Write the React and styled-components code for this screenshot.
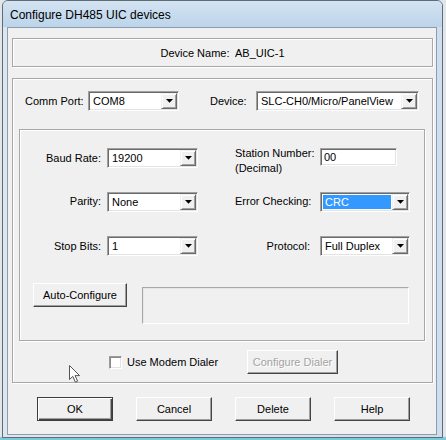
import React from 'react';
import styled, { createGlobalStyle, css } from 'styled-components';

const GlobalStyle = createGlobalStyle`
  html, body { margin: 0; padding: 0; }
  body {
    background: #e2e6e9;
    font-family: "Liberation Sans", Arial, sans-serif;
    font-size: 11px;
    color: #000;
  }
`;

const Page = styled.div`
  position: relative;
  width: 446px;
  height: 440px;
  overflow: hidden;
  box-sizing: border-box;
  padding-left: 2px;
  background: linear-gradient(to bottom, #e2e6e9 0, #e2e6e9 437px, #7ccad8 437px);
`;

const Window = styled.div`
  width: 441px;
  height: 438px;
  box-sizing: border-box;
  border: 1px solid #5f6b77;
  border-radius: 6px 6px 0 0;
  overflow: hidden;
  display: flex;
  flex-direction: column;
  background: #c9dbec;
`;

const TitleBar = styled.div`
  height: 26px;
  flex: none;
  display: flex;
  align-items: center;
  padding: 2px 0 0 7px;
  box-sizing: border-box;
  background: linear-gradient(to bottom, #d3e3f2 0%, #bcd4ea 100%);
`;

const Title = styled.span`
  font-family: "Liberation Sans", Arial, sans-serif;
  font-size: 12px;
  color: #000;
`;

const Frame = styled.div`
  flex: 1;
  display: flex;
  padding: 0 5px 2px 4px;
  background: linear-gradient(to right, #dde6ee, #cfdeec);
`;

const Client = styled.div`
  flex: 1;
  box-sizing: border-box;
  background: #f0f0f0;
  border: 1px solid #8e9cab;
  padding: 10px 3px 0 4px;
  display: flex;
  flex-direction: column;
  align-items: flex-start;
`;

const etched = css`
  box-sizing: border-box;
  border: 1px solid #a8a8a8;
  box-shadow: inset 1px 1px 0 #fff, 1px 1px 0 #fff;
`;

const sunken = css`
  box-sizing: border-box;
  border: 1px solid;
  border-color: #a0a0a0 #fff #fff #a0a0a0;
  box-shadow: inset 1px 1px 0 #6a6a6a, inset -1px -1px 0 #e3e3e3;
`;

const DeviceNameBox = styled.div`
  ${etched};
  width: 421px;
  height: 29px;
  display: flex;
  align-items: center;
  justify-content: center;
  white-space: pre;
`;

const GroupBox = styled.div`
  ${etched};
  width: ${p => p.$w}px;
  height: ${p => p.$h}px;
  margin-top: ${p => p.$mt}px;
  margin-left: ${p => p.$ml || 0}px;
  padding-top: ${p => p.$pt || 0}px;
  display: flex;
  flex-direction: column;
  align-items: flex-start;
`;

const TopRow = styled.div`
  display: flex;
  align-items: center;
  height: 20px;
  margin-top: 12px;
  padding-left: 12px;
`;

const Label = styled.div`
  width: ${p => p.$w}px;
  margin-left: ${p => p.$ml || 0}px;
  white-space: nowrap;
`;

const FormGrid = styled.div`
  display: grid;
  grid-template-columns: 87px 128px 85px auto;
  grid-auto-rows: 20px;
  row-gap: 24px;
  align-items: center;
`;

const FieldLabel = styled.div`
  text-align: ${p => (p.$left ? 'left' : 'right')};
  padding-right: ${p => p.$pr}px;
  padding-bottom: ${p => (p.$lift ? 3 : 0)}px;
  white-space: nowrap;
  ${p =>
    p.$multi &&
    css`
      align-self: start;
      line-height: 15px;
      margin-top: -2px;
    `}
`;

const ComboBox = styled.div`
  ${sunken};
  width: ${p => p.$w}px;
  height: 20px;
  padding: 1px;
  background: #fff;
  display: flex;
  justify-self: start;
`;

const ComboValue = styled.div`
  flex: 1;
  padding: 1px;
  display: flex;
`;

const ComboText = styled.div`
  flex: 1;
  height: 14px;
  line-height: 14px;
  padding-left: 2px;
  white-space: nowrap;
  overflow: hidden;
  ${p =>
    p.$selected &&
    css`
      background: #3399ff;
      color: #fff;
    `}
`;

const DropButton = styled.div`
  width: 16px;
  height: 16px;
  box-sizing: border-box;
  background: #f0f0f0;
  border: 1px solid;
  border-color: #f0f0f0 #6a6a6a #6a6a6a #f0f0f0;
  box-shadow: inset 1px 1px 0 #fff, inset -1px -1px 0 #a0a0a0;
  display: flex;
  align-items: center;
  justify-content: center;
`;

const EditBox = styled.div`
  ${sunken};
  width: ${p => p.$w}px;
  height: 18px;
  padding: 1px 1px 1px 3px;
  background: #fff;
  line-height: 14px;
  align-self: start;
  justify-self: start;
`;

const AutoRow = styled.div`
  display: flex;
  align-items: flex-start;
  margin-top: 27px;
  padding-left: 13px;
`;

const StatusBox = styled.div`
  box-sizing: border-box;
  width: 267px;
  height: 37px;
  margin: 4px 0 0 15px;
  border: 1px solid;
  border-color: #a8a8a8 #fff #fff #a8a8a8;
  box-shadow: inset 1px 1px 0 #e6e6e6;
`;

const Button = styled.button`
  width: ${p => p.$w}px;
  height: 24px;
  box-sizing: border-box;
  margin: 0;
  padding: 0;
  font-family: "Liberation Sans", Arial, sans-serif;
  font-size: 11px;
  color: #000;
  background: #f0f0f0;
  border: 1px solid;
  border-color: #fff #454545 #454545 #fff;
  box-shadow: inset -1px -1px 0 #a0a0a0, inset 1px 1px 0 #f0f0f0;
  &:disabled {
    color: #a3a3a3;
    text-shadow: 1px 1px 0 #fff;
  }
  ${p =>
    p.$default &&
    css`
      border-color: #3c3c3c;
      box-shadow: inset 1px 1px 0 #fff, inset -1px -1px 0 #454545, inset -2px -2px 0 #a0a0a0;
    `}
`;

const ModemRow = styled.div`
  display: flex;
  align-items: center;
  height: 24px;
  margin-top: 9px;
  padding-left: 96px;
`;

const CheckWrap = styled.label`
  width: 138px;
  display: flex;
  align-items: center;
`;

const CheckBox = styled.span`
  ${sunken};
  width: 13px;
  height: 13px;
  background: #fff;
  border-color: #9a9a9a #fff #fff #9a9a9a;
  box-shadow: inset 1px 1px 0 #8a8a8a, inset -1px -1px 0 #e3e3e3;
`;

const CheckText = styled.span`
  margin-left: 5px;
`;

const ButtonRow = styled.div`
  display: flex;
  gap: 23px;
  margin-top: 14px;
  padding-left: 25px;
`;

const Cursor = styled.svg`
  position: absolute;
  left: 68px;
  top: 364px;
`;

const Arrow = () => (
  <svg width="7" height="4" viewBox="0 0 7 4">
    <polygon points="0,0 7,0 3.5,3.8" fill="#000" />
  </svg>
);

const Combo = ({ w, value, selected }) => (
  <ComboBox $w={w}>
    <ComboValue>
      <ComboText $selected={selected}>{value}</ComboText>
    </ComboValue>
    <DropButton>
      <Arrow />
    </DropButton>
  </ComboBox>
);

export default function App() {
  return (
    <Page>
      <GlobalStyle />
      <Window>
        <TitleBar>
          <Title>Configure DH485 UIC devices</Title>
        </TitleBar>
        <Frame>
          <Client>
            <DeviceNameBox>{'Device Name:  AB_UIC-1'}</DeviceNameBox>
            <GroupBox $w={421} $h={305} $mt={11}>
              <TopRow>
                <Label $w={63}>Comm Port:</Label>
                <Combo w={91} value="COM8" />
                <Label $w={46} $ml={31}>Device:</Label>
                <Combo w={163} value="SLC-CH0/Micro/PanelView" />
              </TopRow>
              <GroupBox $w={406} $h={212} $mt={18} $ml={6} $pt={18}>
                <FormGrid>
                  <FieldLabel $pr={6}>Baud Rate:</FieldLabel>
                  <Combo w={91} value="19200" />
                  <FieldLabel $left $multi $pr={0}>
                    Station Number:
                    <br />
                    (Decimal)
                  </FieldLabel>
                  <EditBox $w={77}>00</EditBox>

                  <FieldLabel $pr={6} $lift>Parity:</FieldLabel>
                  <Combo w={91} value="None" />
                  <FieldLabel $pr={10} $lift>Error Checking:</FieldLabel>
                  <Combo w={90} value="CRC" selected />

                  <FieldLabel $pr={6}>Stop Bits:</FieldLabel>
                  <Combo w={91} value="1" />
                  <FieldLabel $pr={10}>Protocol:</FieldLabel>
                  <Combo w={90} value="Full Duplex" />
                </FormGrid>
                <AutoRow>
                  <Button $w={94}>Auto-Configure</Button>
                  <StatusBox />
                </AutoRow>
              </GroupBox>
              <ModemRow>
                <CheckWrap>
                  <CheckBox />
                  <CheckText>Use Modem Dialer</CheckText>
                </CheckWrap>
                <Button $w={91} disabled>
                  Configure Dialer
                </Button>
              </ModemRow>
            </GroupBox>
            <ButtonRow>
              <Button $w={76} $default>OK</Button>
              <Button $w={76}>Cancel</Button>
              <Button $w={76}>Delete</Button>
              <Button $w={76}>Help</Button>
            </ButtonRow>
          </Client>
        </Frame>
      </Window>
      <Cursor width="14" height="20" viewBox="0 0 14 20">
        <path
          d="M1.5 1.5 L1.5 15.5 L4.8 12.4 L7.4 18.2 L9.6 17.2 L7.1 11.6 L11.6 11.6 Z"
          fill="#fff"
          stroke="#555"
          strokeWidth="1"
          strokeLinejoin="round"
        />
      </Cursor>
    </Page>
  );
}
